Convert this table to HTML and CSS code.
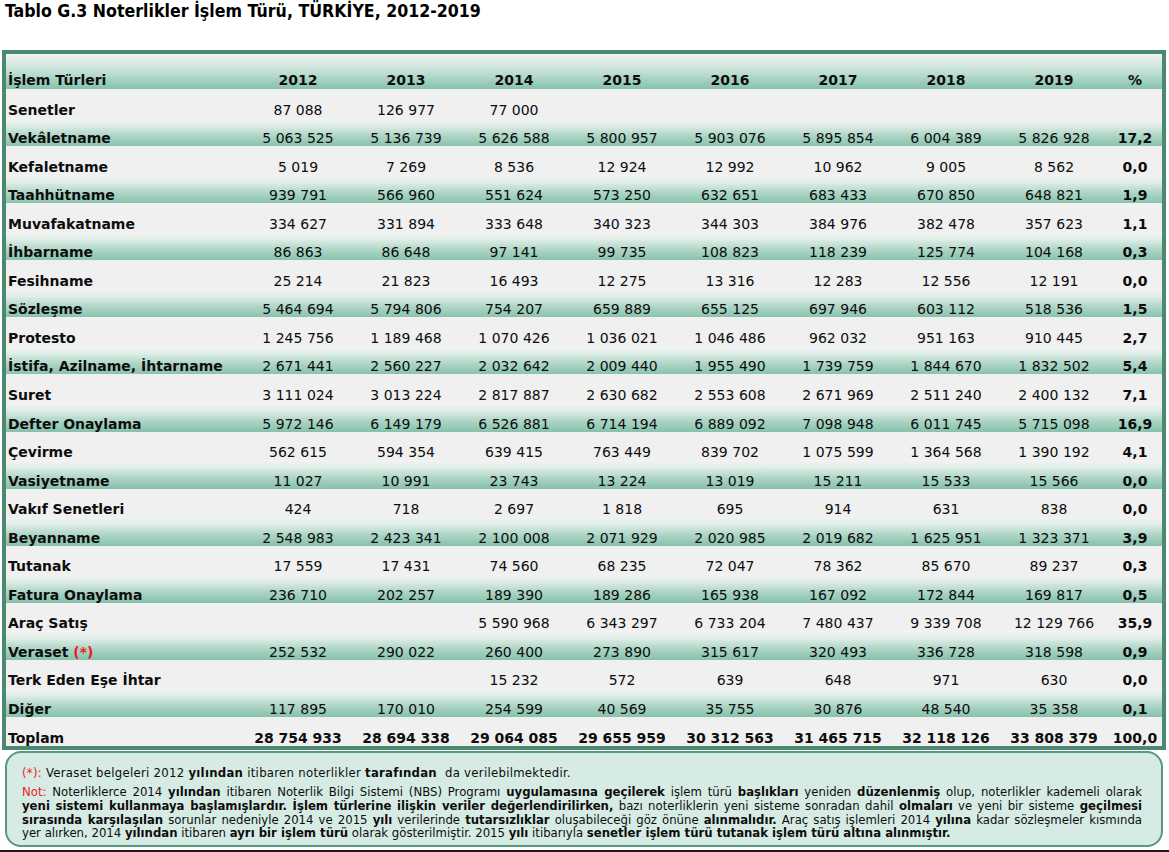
FILE: index.html
```html
<!DOCTYPE html>
<html lang="tr">
<head>
<meta charset="utf-8">
<title>Tablo G.3</title>
<link rel="stylesheet" href="styles.css">
</head>
<body>
<h1 class="title">Tablo G.3 Noterlikler İşlem Türü, TÜRKİYE, 2012-2019</h1>
<div class="box">
<table class="data">
<colgroup>
<col class="c-label"><col class="c-year"><col class="c-year"><col class="c-year"><col class="c-year"><col class="c-year"><col class="c-year"><col class="c-year"><col class="c-year"><col class="c-pct">
</colgroup>
<thead>
<tr class="head"><th class="lbl">İşlem Türleri</th><th>2012</th><th>2013</th><th>2014</th><th>2015</th><th>2016</th><th>2017</th><th>2018</th><th>2019</th><th>%</th></tr>
</thead>
<tbody>
<tr class="lt"><th class="lbl">Senetler</th><td>87 088</td><td>126 977</td><td>77 000</td><td></td><td></td><td></td><td></td><td></td><td class="pct"></td></tr>
<tr class="gr"><th class="lbl">Vekâletname</th><td>5 063 525</td><td>5 136 739</td><td>5 626 588</td><td>5 800 957</td><td>5 903 076</td><td>5 895 854</td><td>6 004 389</td><td>5 826 928</td><td class="pct">17,2</td></tr>
<tr class="lt"><th class="lbl">Kefaletname</th><td>5 019</td><td>7 269</td><td>8 536</td><td>12 924</td><td>12 992</td><td>10 962</td><td>9 005</td><td>8 562</td><td class="pct">0,0</td></tr>
<tr class="gr"><th class="lbl">Taahhütname</th><td>939 791</td><td>566 960</td><td>551 624</td><td>573 250</td><td>632 651</td><td>683 433</td><td>670 850</td><td>648 821</td><td class="pct">1,9</td></tr>
<tr class="lt"><th class="lbl">Muvafakatname</th><td>334 627</td><td>331 894</td><td>333 648</td><td>340 323</td><td>344 303</td><td>384 976</td><td>382 478</td><td>357 623</td><td class="pct">1,1</td></tr>
<tr class="gr"><th class="lbl">İhbarname</th><td>86 863</td><td>86 648</td><td>97 141</td><td>99 735</td><td>108 823</td><td>118 239</td><td>125 774</td><td>104 168</td><td class="pct">0,3</td></tr>
<tr class="lt"><th class="lbl">Fesihname</th><td>25 214</td><td>21 823</td><td>16 493</td><td>12 275</td><td>13 316</td><td>12 283</td><td>12 556</td><td>12 191</td><td class="pct">0,0</td></tr>
<tr class="gr"><th class="lbl">Sözleşme</th><td>5 464 694</td><td>5 794 806</td><td>754 207</td><td>659 889</td><td>655 125</td><td>697 946</td><td>603 112</td><td>518 536</td><td class="pct">1,5</td></tr>
<tr class="lt"><th class="lbl">Protesto</th><td>1 245 756</td><td>1 189 468</td><td>1 070 426</td><td>1 036 021</td><td>1 046 486</td><td>962 032</td><td>951 163</td><td>910 445</td><td class="pct">2,7</td></tr>
<tr class="gr"><th class="lbl">İstifa, Azilname, İhtarname</th><td>2 671 441</td><td>2 560 227</td><td>2 032 642</td><td>2 009 440</td><td>1 955 490</td><td>1 739 759</td><td>1 844 670</td><td>1 832 502</td><td class="pct">5,4</td></tr>
<tr class="lt"><th class="lbl">Suret</th><td>3 111 024</td><td>3 013 224</td><td>2 817 887</td><td>2 630 682</td><td>2 553 608</td><td>2 671 969</td><td>2 511 240</td><td>2 400 132</td><td class="pct">7,1</td></tr>
<tr class="gr"><th class="lbl">Defter Onaylama</th><td>5 972 146</td><td>6 149 179</td><td>6 526 881</td><td>6 714 194</td><td>6 889 092</td><td>7 098 948</td><td>6 011 745</td><td>5 715 098</td><td class="pct">16,9</td></tr>
<tr class="lt"><th class="lbl">Çevirme</th><td>562 615</td><td>594 354</td><td>639 415</td><td>763 449</td><td>839 702</td><td>1 075 599</td><td>1 364 568</td><td>1 390 192</td><td class="pct">4,1</td></tr>
<tr class="gr"><th class="lbl">Vasiyetname</th><td>11 027</td><td>10 991</td><td>23 743</td><td>13 224</td><td>13 019</td><td>15 211</td><td>15 533</td><td>15 566</td><td class="pct">0,0</td></tr>
<tr class="lt"><th class="lbl">Vakıf Senetleri</th><td>424</td><td>718</td><td>2 697</td><td>1 818</td><td>695</td><td>914</td><td>631</td><td>838</td><td class="pct">0,0</td></tr>
<tr class="gr"><th class="lbl">Beyanname</th><td>2 548 983</td><td>2 423 341</td><td>2 100 008</td><td>2 071 929</td><td>2 020 985</td><td>2 019 682</td><td>1 625 951</td><td>1 323 371</td><td class="pct">3,9</td></tr>
<tr class="lt"><th class="lbl">Tutanak</th><td>17 559</td><td>17 431</td><td>74 560</td><td>68 235</td><td>72 047</td><td>78 362</td><td>85 670</td><td>89 237</td><td class="pct">0,3</td></tr>
<tr class="gr"><th class="lbl">Fatura Onaylama</th><td>236 710</td><td>202 257</td><td>189 390</td><td>189 286</td><td>165 938</td><td>167 092</td><td>172 844</td><td>169 817</td><td class="pct">0,5</td></tr>
<tr class="lt"><th class="lbl">Araç Satış</th><td></td><td></td><td>5 590 968</td><td>6 343 297</td><td>6 733 204</td><td>7 480 437</td><td>9 339 708</td><td>12 129 766</td><td class="pct">35,9</td></tr>
<tr class="gr"><th class="lbl">Veraset <span class="red">(*)</span></th><td>252 532</td><td>290 022</td><td>260 400</td><td>273 890</td><td>315 617</td><td>320 493</td><td>336 728</td><td>318 598</td><td class="pct">0,9</td></tr>
<tr class="lt"><th class="lbl">Terk Eden Eşe İhtar</th><td></td><td></td><td>15 232</td><td>572</td><td>639</td><td>648</td><td>971</td><td>630</td><td class="pct">0,0</td></tr>
<tr class="gr"><th class="lbl">Diğer</th><td>117 895</td><td>170 010</td><td>254 599</td><td>40 569</td><td>35 755</td><td>30 876</td><td>48 540</td><td>35 358</td><td class="pct">0,1</td></tr>
<tr class="lt total"><th class="lbl">Toplam</th><td>28 754 933</td><td>28 694 338</td><td>29 064 085</td><td>29 655 959</td><td>30 312 563</td><td>31 465 715</td><td>32 118 126</td><td>33 808 379</td><td class="pct">100,0</td></tr>
</tbody>
</table>
</div>
<div class="note">
<p class="note-first"><span class="red">(*):</span> Veraset belgeleri 2012 <b>yılından</b> itibaren noterlikler <b>tarafından</b>&nbsp; da verilebilmektedir.</p>
<div class="note-par">
<p class="jl"><span class="red">Not:</span> Noterliklerce 2014 <b>yılından</b> itibaren Noterlik Bilgi Sistemi (NBS) Programı <b>uygulamasına geçilerek</b> işlem türü <b>başlıkları</b> yeniden <b>düzenlenmiş</b> olup, noterlikler kademeli olarak</p>
<p class="jl"><b>yeni sistemi kullanmaya başlamışlardır. İşlem türlerine ilişkin veriler değerlendirilirken,</b> bazı noterliklerin yeni sisteme sonradan dahil <b>olmaları</b> ve yeni bir sisteme <b>geçilmesi</b></p>
<p class="jl"><b>sırasında karşılaşılan</b> sorunlar nedeniyle 2014 ve 2015 <b>yılı</b> verilerinde <b>tutarsızlıklar</b> oluşabileceği göz önüne <b>alınmalıdır.</b> Araç satış işlemleri 2014 <b>yılına</b> kadar sözleşmeler kısmında</p>
<p class="jlast">yer alırken, 2014 <b>yılından</b> itibaren <b>ayrı bir işlem türü</b> olarak gösterilmiştir. 2015 <b>yılı</b> itibarıyla <b>senetler işlem türü tutanak işlem türü altına alınmıştır.</b></p>
</div>
</div>
<div class="edge"></div>
</body>
</html>
```
FILE: styles.css
```css
html, body {
  margin: 0;
  padding: 0;
  background: #ffffff;
}
body {
  font-family: "DejaVu Sans", Verdana, sans-serif;
  color: #0d0d0d;
  width: 1169px;
  height: 852px;
  overflow: hidden;
  position: relative;
}
.title {
  margin: 0;
  padding: 1px 0 0 5px;
  height: 50px;
  box-sizing: border-box;
  font-size: 17.6px;
  font-stretch: condensed;
  font-weight: bold;
  line-height: 20px;
  color: #000;
}
.box {
  margin-left: 2px;
  width: 1164px;
  border: 4px solid #4b8a71;
  box-sizing: border-box;
  background: #f0f0f0;
}
.data {
  width: 1156px;
  border-collapse: collapse;
  table-layout: fixed;
  font-size: 14px;
}
.c-label { width: 238px; }
.c-year { width: 108px; }
.c-pct { width: 54px; }
.data th, .data td {
  padding: 0;
  text-align: center;
  vertical-align: bottom;
  white-space: nowrap;
  line-height: 16px;
}
.data td { font-weight: normal; }
.data th.lbl {
  text-align: left;
  padding-left: 2px;
  font-weight: bold;
}
.data .pct { font-weight: bold; }
.head {
  height: 35px;
  background: linear-gradient(to bottom, #edf3f1 0%, #c9e3d9 45%, #86c2ad 100%);
}
.head th {
  font-weight: bold;
  padding-bottom: 1px;
}
.lt {
  height: 28.56px;
  background: #f0f0f0;
}
.gr {
  height: 28.56px;
  background: linear-gradient(to bottom, #f3f3f3 0%, #e0eee8 25%, #a9d3c3 65%, #86c1ac 100%);
}
.total td { font-weight: bold; }
.red {
  color: #ee1b24;
}
.note {
  margin: 1px 0 0 5px;
  width: 1158px;
  height: 96px;
  box-sizing: border-box;
  border: 2px solid #5a9782;
  border-radius: 16px;
  background: #d6ebe3;
  padding: 13px 19px 0 15px;
  font-size: 13px;
  font-stretch: condensed;
  color: #0d0d0d;
}
.note p {
  margin: 0;
  line-height: 13.7px;
}
.note .note-first {
  margin-bottom: 6px;
  letter-spacing: 0.28px;
}
.note .jl {
  text-align: justify;
  text-align-last: justify;
}
.note .jlast {
  text-align: left;
}
.edge {
  position: absolute;
  left: 0;
  right: 0;
  bottom: 0;
  height: 2px;
  background: #1a1a1a;
}
```
